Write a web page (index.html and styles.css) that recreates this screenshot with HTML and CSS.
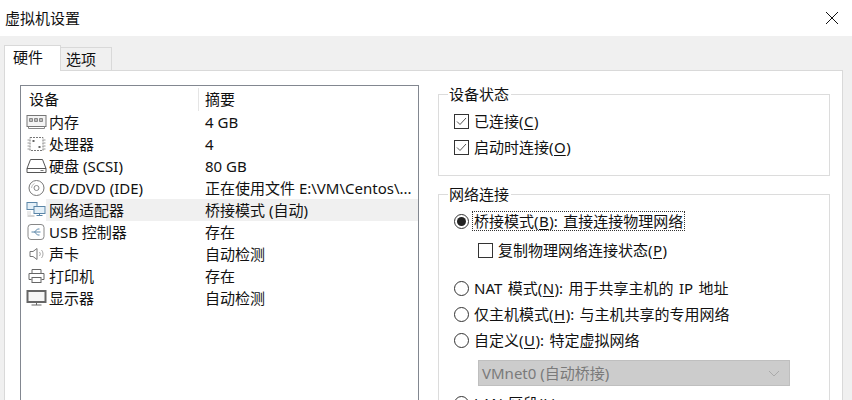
FILE: index.html
```html
<!DOCTYPE html>
<html lang="zh">
<head>
    <meta charset="utf-8">
    <title>虚拟机设置</title>
    <link rel="stylesheet" href="styles.css">
</head>
<body>
    <div class="window">
        <header class="titlebar">
            <span class="title">虚拟机设置</span>
            <svg class="close" width="14" height="14" viewBox="0 0 14 14"><path d="M1 1 13 13M13 1 1 13" stroke="#111" stroke-width="1" fill="none"/></svg>
        </header>
        <div class="dialog">
            <div class="tabs">
                <div class="tab active">硬件</div>
                <div class="tab">选项</div>
            </div>
            <div class="panel">
                <div class="devices">
                    <div class="row head"><div class="col-name">设备</div><div class="col-sum">摘要</div></div>

                    <div class="row">
                        <div class="col-name">
                            <svg class="icon" viewBox="0 0 20 16"><rect x="0.5" y="1.5" width="19" height="11" fill="#f4f4f4" stroke="#777"/><path d="M3 4.5h3v3H3zM8 4.5h3v3H8zM13 4.5h3v3h-3z" fill="#bbb" stroke="#888"/><path d="M2 12.5v2h16v-2" fill="none" stroke="#888"/></svg>
                            内存
                        </div>
                        <div class="col-sum">4 GB</div>
                    </div>
                    <div class="row">
                        <div class="col-name">
                            <svg class="icon" viewBox="0 0 20 16"><rect x="3.5" y="1.5" width="13" height="13" fill="#fff" stroke="#777" stroke-dasharray="2 1"/><path d="M1 4h2M1 7h2M1 10h2M1 13h2M17 4h2M17 7h2M17 10h2M17 13h2" stroke="#999"/><rect x="6" y="4" width="2" height="2" fill="#666"/><rect x="12" y="10" width="2" height="2" fill="#666"/></svg>
                            处理器
                        </div>
                        <div class="col-sum">4</div>
                    </div>
                    <div class="row">
                        <div class="col-name">
                            <svg class="icon" viewBox="0 0 20 16"><path d="M4 1.5h12l3.5 9v4H.5v-4z M.5 10.5h19" fill="#fff" stroke="#555"/><path d="M14 12.5h3" stroke="#777"/></svg>
                            硬盘 (SCSI)
                        </div>
                        <div class="col-sum">80 GB</div>
                    </div>
                    <div class="row">
                        <div class="col-name">
                            <svg class="icon" viewBox="0 0 20 16"><circle cx="10" cy="8" r="7.5" fill="#fff" stroke="#777"/><circle cx="10" cy="8" r="2.5" fill="#fff" stroke="#888"/><path d="M5 8a5 5 0 0 1 3-4.5" fill="none" stroke="#bbb"/></svg>
                            CD/DVD (IDE)
                        </div>
                        <div class="col-sum">正在使用文件 E:\VM\Centos\...</div>
                    </div>
                    <div class="row selected">
                        <div class="col-name">
                            <svg class="icon" viewBox="0 0 20 16"><rect x="0.5" y="0.5" width="10" height="7" fill="#e4f0f8" stroke="#5b86a8"/><rect x="7.5" y="4.5" width="11" height="7" fill="#e4f0f8" stroke="#5b86a8"/><path d="M13 11.5v2M10 13.5h6" stroke="#5b86a8"/><path d="M1 10h1M3 10h1M1 12h1M3 12h1M1 14h7" stroke="#aaa"/></svg>
                            <span class="name-text">网络适配器</span>
                        </div>
                        <div class="col-sum">桥接模式 (自动)</div>
                    </div>
                    <div class="row">
                        <div class="col-name">
                            <svg class="icon" viewBox="0 0 20 16"><rect x="1.5" y="0.5" width="16" height="15" rx="3" fill="#fff" stroke="#888"/><path d="M5 8h9M8 8l3-3h2M8 8l3 3h2" fill="none" stroke="#5b86a8"/></svg>
                            USB 控制器
                        </div>
                        <div class="col-sum">存在</div>
                    </div>
                    <div class="row">
                        <div class="col-name">
                            <svg class="icon" viewBox="0 0 20 16"><path d="M3.5 5.5h3l4-3v11l-4-3h-3z" fill="#fff" stroke="#777"/><path d="M13 6a3 3 0 0 1 0 4M15 4a6 6 0 0 1 0 8" fill="none" stroke="#aaa"/></svg>
                            声卡
                        </div>
                        <div class="col-sum">自动检测</div>
                    </div>
                    <div class="row">
                        <div class="col-name">
                            <svg class="icon" viewBox="0 0 20 16"><path d="M5.5 5.5v-4h9v4" fill="#fff" stroke="#666"/><path d="M5 11.5H2.5v-6h15v6H15" fill="#fff" stroke="#666"/><rect x="5.5" y="9.5" width="9" height="5" fill="#fff" stroke="#666"/></svg>
                            打印机
                        </div>
                        <div class="col-sum">存在</div>
                    </div>
                    <div class="row">
                        <div class="col-name">
                            <svg class="icon" viewBox="0 0 20 16"><rect x="1" y="1" width="18" height="11" fill="#f6f6f6" stroke="#666" stroke-width="2"/><path d="M5 15h10M10 13v2" stroke="#666"/></svg>
                            显示器
                        </div>
                        <div class="col-sum">自动检测</div>
                    </div>
                </div>

                <div class="settings">
                    <fieldset class="group status-group">
                        <legend>设备状态</legend>
                        <label class="option"><span class="check on"><svg width="11" height="9" viewBox="0 0 11 9"><path d="M1 4.5 4 7.5 10 1" fill="none" stroke="#555"/></svg></span>已连接(<u>C</u>)</label>
                        <label class="option"><span class="check on"><svg width="11" height="9" viewBox="0 0 11 9"><path d="M1 4.5 4 7.5 10 1" fill="none" stroke="#555"/></svg></span>启动时连接(<u>O</u>)</label>
                    </fieldset>
                    <fieldset class="group net-group">
                        <legend>网络连接</legend>
                        <label class="option"><span class="radio on"></span><span class="focused">桥接模式(<u>B</u>): 直接连接物理网络</span></label>
                        <label class="option sub"><span class="check"></span>复制物理网络连接状态(<u>P</u>)</label>
                        <label class="option gap"><span class="radio"></span>NAT 模式(<u>N</u>): 用于共享主机的 IP 地址</label>
                        <label class="option"><span class="radio"></span>仅主机模式(<u>H</u>): 与主机共享的专用网络</label>
                        <label class="option"><span class="radio"></span>自定义(<u>U</u>): 特定虚拟网络</label>
                        <div class="select">
                            <span>VMnet0 (自动桥接)</span>
                            <svg width="12" height="7" viewBox="0 0 12 7"><path d="M1 1 6 6 11 1" fill="none" stroke="#aaa"/></svg>
                        </div>
                        <label class="option lan"><span class="radio"></span>LAN 区段(<u>L</u>):</label>
                    </fieldset>
                </div>
            </div>
        </div>
    </div>
</body>
</html>
```

FILE: styles.css
```css
html, body { margin: 0; padding: 0; height: 400px; overflow: hidden; }
body { font-family: "Noto Sans", "Noto Sans CJK SC", sans-serif; font-size: 15px; line-height: 22px; color: #111; background: #fff; }
.window { width: 852px; height: 400px; overflow: hidden; display: flex; flex-direction: column; }

.titlebar { height: 36px; flex: none; display: flex; align-items: center; justify-content: space-between; padding: 0 13px 0 5px; box-sizing: border-box; background: #fff; }
.dialog { flex: 1; background: #f0f0f0; padding: 9px 9px 0 4px; min-height: 0; }

.tabs { display: flex; align-items: flex-end; height: 25px; position: relative; z-index: 1; }
.tab { width: 51px; height: 23px; box-sizing: border-box; border: 1px solid #d9d9d9; border-bottom: none; border-left: none; line-height: 22px; padding-left: 5px; }
.tab.active { width: 57px; height: 26px; margin-bottom: -1px; background: #fff; border-left: 1px solid #d9d9d9; padding-left: 8px; }

.panel { background: #fff; border: 1px solid #d9d9d9; height: 340px; box-sizing: border-box; padding: 14px 12px 0 15px; display: flex; gap: 19px; }

.devices { width: 399px; height: 400px; flex: none; box-sizing: border-box; border: 1px solid #828790; background: #fff; padding-top: 1px; }
.row { display: flex; height: 22px; align-items: center; white-space: nowrap; }
.col-name { width: 177px; padding-left: 7px; box-sizing: border-box; display: flex; align-items: center; }
.col-sum { padding-left: 6px; }
.head { height: 24px; }
.head .col-name { height: 23px; padding-left: 8px; }
.head .col-sum { border-left: 1px solid #e5e5e5; height: 23px; }
.row:not(.head) .col-sum { margin-left: 1px; }
.selected { background: linear-gradient(to right, #fff 25px, #f0f0f0 25px); }
.icon { width: 21px; height: 16px; flex: none; margin-right: 2px; margin-left: -2px; }

.settings { flex: 1; margin-top: -2px; min-width: 0; }
.group { margin: 0 0 7px; padding: 3px 0 0 15px; border: 1px solid #dcdcdc; min-width: 0; }
.group legend { margin-left: -6px; padding: 0 2px 0 1px; }
.status-group { height: 93px; box-sizing: border-box; }
.net-group { height: 300px; box-sizing: border-box; }

.option { display: flex; align-items: center; height: 26px; white-space: pre; word-spacing: 1.5px; }
.option u { text-underline-offset: 2px; margin: 0 0.5px; }
.check { width: 15px; height: 15px; box-sizing: border-box; border: 1px solid #333; margin-right: 5px; display: flex; align-items: center; justify-content: center; flex: none; background: #fff; }
.radio { width: 15px; height: 15px; box-sizing: border-box; border: 1px solid #333; border-radius: 50%; margin-right: 5px; flex: none; display: flex; align-items: center; justify-content: center; background: #fff; }
.radio.on::after { content: ""; width: 9px; height: 9px; border-radius: 50%; background: #222; }
.focused { outline: 1px dotted #333; outline-offset: 0; line-height: 18px; padding: 0 1px; margin-left: -1px; }
.sub { margin: 3px 0 0 24px; }
.gap { margin-top: 12px; }
.select { margin: 7px 0 0 24px; width: 312px; height: 26px; box-sizing: border-box; background: #cccccc; border: 1px solid #bfbfbf; display: flex; align-items: center; justify-content: space-between; padding: 0 9px 0 3px; color: #7a7a7a; }
.lan { margin-top: 4px; }
```
